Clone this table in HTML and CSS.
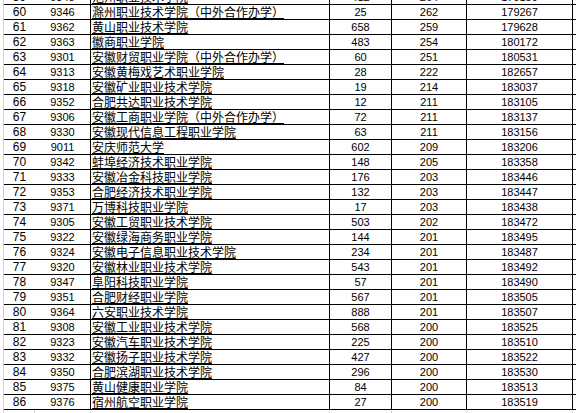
FILE: index.html
```html
<!DOCTYPE html>
<html lang="zh-CN">
<head>
<meta charset="utf-8">
<title>院校投档表</title>
<link rel="stylesheet" href="styles.css">
</head>
<body>
<div class="sheet">
  <div class="grid">
    <div class="row"><div class="c a">59</div><div class="c b">9345</div><div class="c n"><span class="lnk">池州职业技术学院</span></div><div class="c d">412</div><div class="c e">264</div><div class="c f">179159</div></div>
    <div class="row"><div class="c a">60</div><div class="c b">9346</div><div class="c n"><span class="lnk">滁州职业技术学院（中外合作办学）</span></div><div class="c d">25</div><div class="c e">262</div><div class="c f">179267</div></div>
    <div class="row"><div class="c a">61</div><div class="c b">9362</div><div class="c n"><span class="lnk">黄山职业技术学院</span></div><div class="c d">658</div><div class="c e">259</div><div class="c f">179628</div></div>
    <div class="row"><div class="c a">62</div><div class="c b">9363</div><div class="c n"><span class="lnk">徽商职业学院</span></div><div class="c d">483</div><div class="c e">254</div><div class="c f">180172</div></div>
    <div class="row"><div class="c a">63</div><div class="c b">9301</div><div class="c n"><span class="lnk">安徽财贸职业学院（中外合作办学）</span></div><div class="c d">60</div><div class="c e">251</div><div class="c f">180531</div></div>
    <div class="row"><div class="c a">64</div><div class="c b">9313</div><div class="c n"><span class="lnk">安徽黄梅戏艺术职业学院</span></div><div class="c d">28</div><div class="c e">222</div><div class="c f">182657</div></div>
    <div class="row"><div class="c a">65</div><div class="c b">9318</div><div class="c n"><span class="lnk">安徽矿业职业技术学院</span></div><div class="c d">19</div><div class="c e">214</div><div class="c f">183037</div></div>
    <div class="row"><div class="c a">66</div><div class="c b">9352</div><div class="c n"><span class="lnk">合肥共达职业技术学院</span></div><div class="c d">12</div><div class="c e">211</div><div class="c f">183105</div></div>
    <div class="row"><div class="c a">67</div><div class="c b">9306</div><div class="c n"><span class="lnk">安徽工商职业学院（中外合作办学）</span></div><div class="c d">72</div><div class="c e">211</div><div class="c f">183137</div></div>
    <div class="row"><div class="c a">68</div><div class="c b">9330</div><div class="c n"><span class="lnk">安徽现代信息工程职业学院</span></div><div class="c d">63</div><div class="c e">211</div><div class="c f">183156</div></div>
    <div class="row"><div class="c a">69</div><div class="c b">9011</div><div class="c n"><span class="lnk">安庆师范大学</span></div><div class="c d">602</div><div class="c e">209</div><div class="c f">183206</div></div>
    <div class="row"><div class="c a">70</div><div class="c b">9342</div><div class="c n"><span class="lnk">蚌埠经济技术职业学院</span></div><div class="c d">148</div><div class="c e">205</div><div class="c f">183358</div></div>
    <div class="row"><div class="c a">71</div><div class="c b">9333</div><div class="c n"><span class="lnk">安徽冶金科技职业学院</span></div><div class="c d">176</div><div class="c e">203</div><div class="c f">183446</div></div>
    <div class="row"><div class="c a">72</div><div class="c b">9353</div><div class="c n"><span class="lnk">合肥经济技术职业学院</span></div><div class="c d">132</div><div class="c e">203</div><div class="c f">183447</div></div>
    <div class="row"><div class="c a">73</div><div class="c b">9371</div><div class="c n"><span class="lnk">万博科技职业学院</span></div><div class="c d">17</div><div class="c e">203</div><div class="c f">183438</div></div>
    <div class="row"><div class="c a">74</div><div class="c b">9305</div><div class="c n"><span class="lnk">安徽工贸职业技术学院</span></div><div class="c d">503</div><div class="c e">202</div><div class="c f">183472</div></div>
    <div class="row"><div class="c a">75</div><div class="c b">9322</div><div class="c n"><span class="lnk">安徽绿海商务职业学院</span></div><div class="c d">144</div><div class="c e">201</div><div class="c f">183495</div></div>
    <div class="row"><div class="c a">76</div><div class="c b">9324</div><div class="c n"><span class="lnk">安徽电子信息职业技术学院</span></div><div class="c d">234</div><div class="c e">201</div><div class="c f">183487</div></div>
    <div class="row"><div class="c a">77</div><div class="c b">9320</div><div class="c n"><span class="lnk">安徽林业职业技术学院</span></div><div class="c d">543</div><div class="c e">201</div><div class="c f">183492</div></div>
    <div class="row"><div class="c a">78</div><div class="c b">9347</div><div class="c n"><span class="lnk">阜阳科技职业学院</span></div><div class="c d">57</div><div class="c e">201</div><div class="c f">183490</div></div>
    <div class="row"><div class="c a">79</div><div class="c b">9351</div><div class="c n"><span class="lnk">合肥财经职业学院</span></div><div class="c d">567</div><div class="c e">201</div><div class="c f">183505</div></div>
    <div class="row"><div class="c a">80</div><div class="c b">9364</div><div class="c n"><span class="lnk">六安职业技术学院</span></div><div class="c d">888</div><div class="c e">201</div><div class="c f">183507</div></div>
    <div class="row"><div class="c a">81</div><div class="c b">9308</div><div class="c n"><span class="lnk">安徽工业职业技术学院</span></div><div class="c d">568</div><div class="c e">200</div><div class="c f">183525</div></div>
    <div class="row"><div class="c a">82</div><div class="c b">9323</div><div class="c n"><span class="lnk">安徽汽车职业技术学院</span></div><div class="c d">225</div><div class="c e">200</div><div class="c f">183510</div></div>
    <div class="row"><div class="c a">83</div><div class="c b">9332</div><div class="c n"><span class="lnk">安徽扬子职业技术学院</span></div><div class="c d">427</div><div class="c e">200</div><div class="c f">183522</div></div>
    <div class="row"><div class="c a">84</div><div class="c b">9350</div><div class="c n"><span class="lnk">合肥滨湖职业技术学院</span></div><div class="c d">296</div><div class="c e">200</div><div class="c f">183530</div></div>
    <div class="row"><div class="c a">85</div><div class="c b">9375</div><div class="c n"><span class="lnk">黄山健康职业学院</span></div><div class="c d">84</div><div class="c e">200</div><div class="c f">183513</div></div>
    <div class="row"><div class="c a">86</div><div class="c b">9376</div><div class="c n"><span class="lnk">宿州航空职业学院</span></div><div class="c d">27</div><div class="c e">200</div><div class="c f">183519</div></div>
    <div class="row empty"><div class="c a"></div><div class="c b"></div><div class="c n"></div><div class="c d"></div><div class="c e"></div><div class="c f"></div></div>
  </div>
</div>
</body>
</html>
```
FILE: styles.css
```css
html, body {
  margin: 0;
  padding: 0;
  background: #ffffff;
}
body {
  width: 576px;
  height: 413px;
  overflow: hidden;
}
.sheet {
  height: 413px;
  overflow: hidden;
  margin-left: 3px;
  border-left: 1px solid #d4d4d4;
}
.grid {
  margin-top: -10px;
}
.row {
  display: grid;
  grid-template-columns: 31px 55px 239px 62px 75px 107px;
  height: 15px;
  box-sizing: border-box;
  border-bottom: 1px solid #000000;
}
.c {
  box-sizing: border-box;
  height: 14px;
  line-height: 14px;
  white-space: nowrap;
  overflow: visible;
  color: #000000;
  font-family: "Liberation Sans", Arial, sans-serif;
  font-size: 11px;
  text-align: center;
}
.a {
  font-size: 12px;
}
.n, .d, .e, .f {
  border-left: 1px solid #000000;
}
.f {
  border-right: 1px solid #000000;
}
.n {
  text-align: left;
  padding-left: 1px;
  font-family: "Noto Sans CJK SC", "Noto Sans", sans-serif;
  font-size: 12px;
}
.lnk {
  display: inline-block;
  height: 14px;
  line-height: 14px;
  vertical-align: top;
  text-decoration: underline;
  text-decoration-thickness: 1px;
  text-underline-offset: 1px;
}
.row.empty {
  border-bottom: none;
  height: 10px;
}
.row.empty .c {
  height: 10px;
}
.row.empty .a {
  border-right: 1px solid #d4d4d4;
}
.row.empty .n,
.row.empty .d,
.row.empty .e {
  border-left: 1px solid #d4d4d4;
}
.row.empty .f {
  border-left: 1px solid #d4d4d4;
  border-right: 1px solid #d4d4d4;
}
```
